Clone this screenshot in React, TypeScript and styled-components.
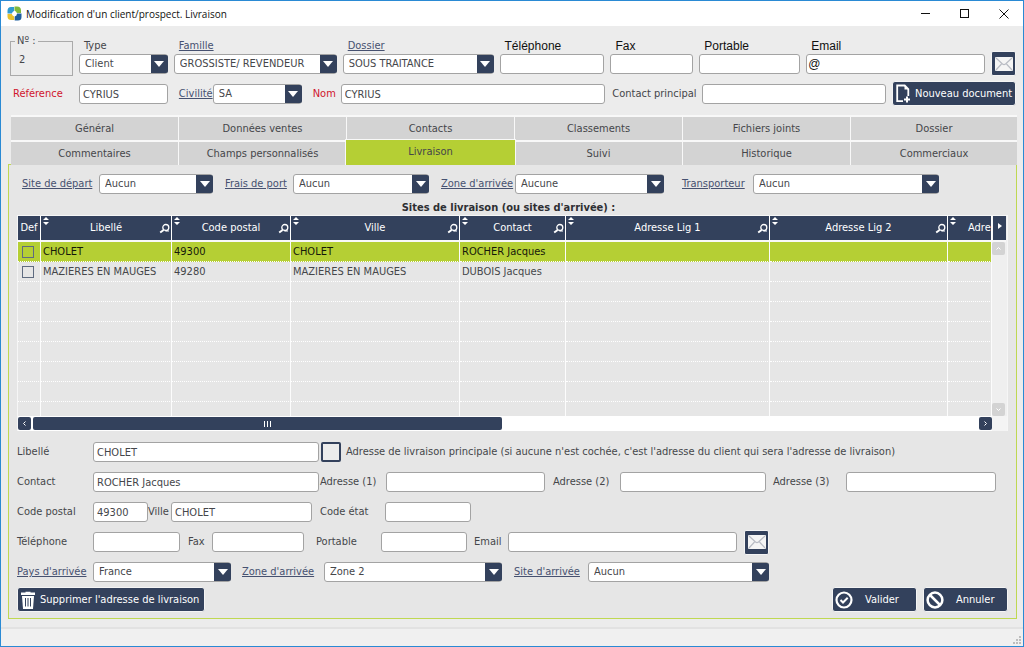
import React, { useId } from "react";
import styled, { createGlobalStyle, css } from "styled-components";

const navy = "#33415c";
const lime = "#b5cf34";
const ink = "#45464a";

const GlobalStyle = createGlobalStyle`
  * { box-sizing: border-box; }
  body {
    margin: 0;
    color: ${ink};
    font-family: "DejaVu Sans Condensed", "DejaVu Sans", sans-serif;
    font-size: 11px;
    line-height: 14px;
  }
  input, select, button { font: inherit; color: inherit; margin: 0; }
`;

const Window = styled.div`
  display: flex;
  flex-direction: column;
  min-height: 100vh;
  border: 1px solid #2a8ad4;
  background: #ececec;
`;

const TitleBar = styled.header`
  display: flex;
  align-items: center;
  height: 25px;
  padding-left: 6px;
  background: #fff;
  color: #111;
  font-family: "Open Sans", sans-serif;
`;

const Title = styled.h1`
  flex: 1;
  margin: 0 0 0 4px;
  font-size: 10px;
  font-weight: 400;
`;

const WindowButton = styled.button`
  display: flex;
  align-items: center;
  justify-content: center;
  width: 39px;
  height: 24px;
  padding: 0;
  border: 0;
  background: none;
`;

const ClientForm = styled.section`
  display: flex;
  flex-direction: column;
  gap: 5px;
  padding: 8px 7px 9px 9px;
`;

const TopRow = styled.div`
  display: flex;
  align-items: flex-end;
  gap: 6px;
`;

const NumberBox = styled.fieldset`
  width: 63px;
  height: 42px;
  margin: 0;
  padding: 5px 8px;
  border: 1px solid #aaa;
`;

const Legend = styled.legend`
  margin-left: -4px;
  padding: 0 2px;
  line-height: 14px;
`;

const Stack = styled.div<{ $w: number }>`
  display: flex;
  flex-direction: column;
  flex: ${(p) => p.$w} 1 ${(p) => p.$w}px;
  min-width: 0;
  padding-bottom: 2px;
`;

const StackLabel = styled.label<{ $arial?: boolean }>`
  height: 16px;
  padding-left: 5px;
  line-height: 16px;
  ${(p) =>
    p.$arial &&
    css`
      color: #111;
      font-family: "Liberation Sans", sans-serif;
      font-size: 12px;
    `}
`;

const Link = styled.a`
  color: #465170;
  text-decoration: underline;
`;

const Row = styled.div`
  display: flex;
  align-items: center;
  height: 25px;
`;

const Label = styled.label<{ $w: number; $indent?: number; $required?: boolean }>`
  flex: none;
  width: ${(p) => p.$w}px;
  padding-left: ${(p) => p.$indent ?? 0}px;
  white-space: nowrap;
  ${(p) => p.$required && "color: #d0142c;"}
`;

const sized = css<{ $w?: number }>`
  ${(p) => (p.$w ? `flex: ${p.$w} 1 ${p.$w}px;` : "width: 100%;")}
  min-width: 0;
`;

const Input = styled.input<{ $w?: number; $arial?: boolean }>`
  ${sized}
  height: 20px;
  padding: 1px 3px 0;
  border: 1px solid #a3a3a3;
  border-radius: 3px;
  background: #fff;
  ${(p) =>
    p.$arial &&
    css`
      padding: 0 1px;
      color: #111;
      font-family: "Liberation Sans", sans-serif;
      font-size: 12px;
    `}
`;

const SelectBox = styled.div<{ $w?: number }>`
  ${sized}
  position: relative;
  height: 20px;
`;

const NativeSelect = styled.select`
  display: block;
  width: 100%;
  height: 20px;
  padding: 0 18px 0 5px;
  border: 1px solid #a3a3a3;
  border-radius: 3px;
  background: #fff;
  appearance: none;
`;

const Arrow = styled.span`
  position: absolute;
  top: 1px;
  right: 0;
  display: flex;
  align-items: center;
  justify-content: center;
  width: 17px;
  height: 18px;
  border-radius: 0 2px 2px 0;
  background: ${navy};
  pointer-events: none;
`;

const Spacer = styled.div<{ $w: number }>`
  flex: ${(p) => p.$w} 1 ${(p) => p.$w}px;
`;

const Button = styled.button<{ $w: number; $gap?: number }>`
  display: flex;
  flex: none;
  align-items: center;
  gap: ${(p) => p.$gap ?? 4}px;
  width: ${(p) => p.$w}px;
  height: 25px;
  padding: 0 2px;
  border: 1px solid #f4f4f4;
  border-radius: 3px;
  background: ${navy};
  color: #fff;
  white-space: nowrap;
  & > svg { flex: none; }
`;

const MailButton = styled.button`
  display: flex;
  flex: none;
  align-items: center;
  justify-content: center;
  width: 25px;
  height: 25px;
  padding: 0;
  border: 1px solid #f4f4f4;
  border-radius: 2px;
  background: ${navy};
`;

const Tabs = styled.nav`
  position: relative;
  z-index: 1;
  display: grid;
  grid-template-columns: repeat(5, 168fr) 166fr;
  margin: 0 6px -1px 10px;
`;

const Tab = styled.button<{ $active?: boolean }>`
  height: 25px;
  padding: 0;
  border: solid #f8f8f8;
  border-width: 2px 1px 0 0;
  background: #d3d3d3;
  &:nth-child(6n) { border-right: 0; }
  ${(p) =>
    p.$active &&
    css`
      height: 26px;
      margin: -1px -1px 0 -2px;
      border-width: 1px 1px 0;
      padding-bottom: 1px;
      background: ${lime};
      z-index: 1;
    `}
`;

const Panel = styled.main`
  flex: 1;
  margin: 0 6px 8px 7px;
  padding: 6px 8px 6px 8px;
  border: 1px solid #bfd852;
  background: #e6e6e6;
`;

const Caption = styled.h2`
  height: 19px;
  margin: 0 8px 0 0;
  padding-top: 3px;
  color: #2e2f33;
  font-size: 11px;
  font-weight: 700;
  line-height: 18px;
  text-align: center;
`;

const GridFrame = styled.div`
  display: grid;
  grid-template-columns: 1fr 15px;
  margin: 0 0 6px 0;
  border: 1px solid #f6f6f6;
  border-width: 1px 1px 0 1px;
`;

const TableClip = styled.div`
  height: 200px;
  overflow: hidden;
`;

const Table = styled.table`
  width: 100%;
  border-collapse: separate;
  border-spacing: 0;
  table-layout: fixed;
`;

const Th = styled.th`
  height: 26px;
  padding: 0;
  overflow: hidden;
  border-right: 1px solid #fff;
  border-bottom: 2px solid #f8f8f8;
  background: ${navy};
  color: #fff;
  font-weight: 400;
`;

const ThInner = styled.div<{ $narrow?: boolean }>`
  display: grid;
  grid-template-columns: ${(p) => (p.$narrow ? "20px 1fr" : "12px 1fr 12px")};
  align-items: center;
  height: 24px;
  text-align: ${(p) => (p.$narrow ? "left" : "center")};
  white-space: nowrap;
  & > svg:first-child { align-self: start; margin: 1px 0 0 2px; }
`;

const Tr = styled.tr<{ $selected?: boolean }>`
  ${(p) => p.$selected && `background: ${lime}; color: #15180a;`}
`;

const Td = styled.td`
  height: 20px;
  padding: 0 2px;
  overflow: hidden;
  border-right: 1px solid #fcfcfc;
  border-bottom: 1px dotted #fff;
  white-space: nowrap;
`;

const RowCheck = styled.input`
  display: block;
  width: 12px;
  height: 12px;
  margin-left: 2px;
  border: 1px solid #5f6b80;
  background: transparent;
  appearance: none;
`;

const BigCheck = styled.input`
  flex: none;
  width: 20px;
  height: 20px;
  border: 2px solid ${navy};
  border-radius: 2px;
  background: #ececec;
  appearance: none;
`;

const VScroll = styled.div`
  display: flex;
  flex-direction: column;
  justify-content: space-between;
  background: #efefef;
`;

const ScrollButton = styled.button<{ $tone?: "light" }>`
  display: flex;
  align-items: center;
  justify-content: center;
  width: 13px;
  height: 13px;
  padding: 0;
  border: 0;
  border-radius: 2px;
  background: ${(p) => (p.$tone ? "#d3d3d3" : navy)};
`;

const MoreColumns = styled.button`
  display: flex;
  justify-content: center;
  width: 14px;
  height: 26px;
  padding: 7px 0 0;
  border: solid #f8f8f8;
  border-width: 0 0 2px 1px;
  background: ${navy};
`;

const HScroll = styled.div`
  display: flex;
  align-items: center;
  gap: 2px;
  height: 15px;
  background: #fff;
`;

const Thumb = styled.div`
  display: flex;
  align-items: center;
  justify-content: center;
  flex: 470;
  height: 13px;
  border-radius: 2px;
  background: ${navy};
`;

const Track = styled.div`
  flex: 474;
`;

const Corner = styled.div`
  background: #f4f4f4;
`;

const FormRow = styled.div`
  display: flex;
  align-items: center;
  height: 30px;
`;

const Actions = styled.div`
  display: flex;
  align-items: center;
  gap: 6px;
  & > :first-child { margin-right: auto; }
`;

const StatusBar = styled.footer`
  display: flex;
  align-items: flex-end;
  justify-content: flex-end;
  height: 19px;
  padding: 2px;
  border-top: 2px solid #e2e2e2;
  background: #f0f0f0;
`;

function Select({ id, w, value, label }: { id?: string; w?: number; value: string; label: string }) {
  return (
    <SelectBox $w={w}>
      <NativeSelect id={id} aria-label={label} defaultValue={value}>
        <option>{value}</option>
      </NativeSelect>
      <Arrow>
        <svg width="10" height="6" viewBox="0 0 10 6"><path d="M0 0h10L5 6z" fill="#fff" /></svg>
      </Arrow>
    </SelectBox>
  );
}

function TextField(p: { w: number; label: string; labelW: number; indent?: number; value?: string; required?: boolean }) {
  const id = useId();
  return (
    <>
      <Label htmlFor={id} $w={p.labelW} $indent={p.indent} $required={p.required}>{p.label}</Label>
      <Input id={id} $w={p.w} defaultValue={p.value} />
    </>
  );
}

function SelectField(p: { w: number; label: string; labelW: number; indent?: number; value: string }) {
  const id = useId();
  return (
    <>
      <Label htmlFor={id} $w={p.labelW} $indent={p.indent}><Link href="#">{p.label}</Link></Label>
      <Select id={id} w={p.w} value={p.value} label={p.label} />
    </>
  );
}

function StackField(p: { w: number; label: string; value?: string; kind: "select" | "link" | "text" }) {
  const id = useId();
  const arial = p.kind === "text";
  return (
    <Stack $w={p.w}>
      <StackLabel htmlFor={id} $arial={arial}>
        {p.kind === "link" ? <Link href="#">{p.label}</Link> : p.label}
      </StackLabel>
      {arial ? <Input id={id} $arial defaultValue={p.value} /> : <Select id={id} value={p.value ?? ""} label={p.label} />}
    </Stack>
  );
}

const Logo = () => (
  <svg width="15" height="15" viewBox="0 0 15 15">
    <path d="M4 1h3v4a3 3 0 0 0-2 2.500H.5V5Q.5 1 4 1z" fill="#2f9bd0" />
    <path d="M7.500 .5H10q4 0 4 4V7H9.800a3 3 0 0 0-2.300-2.200z" fill="#7fb93b" />
    <path d="M.5 8h4.300a3 3 0 0 0 2.400 2.400V14H4.500Q.5 14 .5 10.500z" fill="#e8c22d" />
    <path d="M10 7.500h4.500V11q0 3.500-3.500 3.500H7.700v-4A3 3 0 0 0 10 7.500z" fill="#1d5f9e" />
    <path d="M7.500 5.200L9.800 7.500 7.500 9.800 5.200 7.500z" fill="#fff" />
  </svg>
);

const Mail = () => (
  <svg width="18" height="14" viewBox="0 0 18 14">
    <rect width="18" height="14" rx="1" fill="#f5f5f5" />
    <path d="M1 1l6.500 6q1.500 1.200 3 0L17 1M1 13l5.500-6M17 13l-5.500-6" fill="none" stroke="#b9bcc4" strokeWidth="1.200" />
  </svg>
);

const NewDoc = () => (
  <svg width="16" height="19" viewBox="0 0 16 19">
    <path d="M8 17.200H2.200V1.500h7.500l3.600 3.600v7" fill="none" stroke="#fff" strokeWidth="1.800" />
    <path d="M9.500 1.500v4h4z" fill="#fff" />
    <path d="M12 12.500v6M9 15.500h6" stroke="#fff" strokeWidth="2" />
  </svg>
);

const Trash = () => (
  <svg width="16" height="18" viewBox="0 0 16 18">
    <path d="M5.500 1.500V.8h5v.7H15v2.500H1V1.500z" fill="#fff" />
    <path d="M2 5h12l-1 13H3z" fill="#fff" />
    <path d="M5.500 7v8.500M8 7v8.500M10.500 7v8.500" stroke={navy} strokeWidth="1" />
  </svg>
);

const Check = () => (
  <svg width="18" height="18" viewBox="0 0 18 18" fill="none" stroke="#fff">
    <circle cx="9" cy="9" r="7.500" strokeWidth="2.200" />
    <path d="M5.500 9l2.500 2.500 4.700-4.700" strokeWidth="2" />
  </svg>
);

const Forbid = () => (
  <svg width="18" height="18" viewBox="0 0 18 18" fill="none" stroke="#fff" strokeWidth="2.500">
    <circle cx="9" cy="9" r="7.400" />
    <path d="M4 4l10 10" />
  </svg>
);

const Sort = () => (
  <svg width="6" height="8" viewBox="0 0 6 8">
    <path d="M3 0l3 3H0zM3 8L0 5h6z" fill="#fff" />
  </svg>
);

const Search = () => (
  <svg width="11" height="11" viewBox="0 0 11 11" fill="none" stroke="#fff">
    <circle cx="6.800" cy="4.500" r="3" strokeWidth="1.300" />
    <path d="M4.600 7L1.200 9.500" strokeWidth="2" />
    <path d="M6.500 8h3.500" strokeWidth="1" />
  </svg>
);

const Chevron = ({ d, color = "#fff" }: { d: string; color?: string }) => (
  <svg width="5" height="5" viewBox="0 0 5 5"><path d={d} fill="none" stroke={color} /></svg>
);

const tabs = [
  "Général", "Données ventes", "Contacts", "Classements", "Fichiers joints", "Dossier",
  "Commentaires", "Champs personnalisés", "Livraison", "Suivi", "Historique", "Commerciaux",
];

const columns = [
  { name: "Libellé", w: 131 },
  { name: "Code postal", w: 119 },
  { name: "Ville", w: 169 },
  { name: "Contact", w: 106 },
  { name: "Adresse Lig 1", w: 204 },
  { name: "Adresse Lig 2", w: 178 },
  { name: "Adre", w: 44, narrow: true },
];

const sites = [
  ["CHOLET", "49300", "CHOLET", "ROCHER Jacques", "", "", ""],
  ["MAZIERES EN MAUGES", "49280", "MAZIERES EN MAUGES", "DUBOIS Jacques", "", "", ""],
];
const blankRows = Array.from({ length: 7 }, () => columns.map(() => ""));

export default function App() {
  return (
    <Window>
      <GlobalStyle />
      <TitleBar>
        <Logo />
        <Title>Modification d'un client/prospect. Livraison</Title>
        <WindowButton aria-label="Réduire">
          <svg width="9" height="9"><path d="M0 4.500h9" stroke="#111" /></svg>
        </WindowButton>
        <WindowButton aria-label="Agrandir">
          <svg width="9" height="9"><rect x=".5" y=".5" width="8" height="8" fill="none" stroke="#111" /></svg>
        </WindowButton>
        <WindowButton aria-label="Fermer">
          <svg width="10" height="10"><path d="M.5 .5l9 9M9.500 .5l-9 9" stroke="#111" /></svg>
        </WindowButton>
      </TitleBar>

      <ClientForm>
        <TopRow>
          <NumberBox>
            <Legend>Nº :</Legend>2
          </NumberBox>
          <StackField w={89} kind="select" label="Type" value="Client" />
          <StackField w={163} kind="link" label="Famille" value="GROSSISTE/ REVENDEUR" />
          <StackField w={151} kind="link" label="Dossier" value="SOUS TRAITANCE" />
          <StackField w={105} kind="text" label="Téléphone" />
          <StackField w={83} kind="text" label="Fax" />
          <StackField w={101} kind="text" label="Portable" />
          <StackField w={179} kind="text" label="Email" value="@" />
          <MailButton aria-label="Envoyer un email"><Mail /></MailButton>
        </TopRow>
        <Row>
          <TextField label="Référence" labelW={69} indent={3} w={89} value="CYRIUS" required />
          <SelectField label="Civilité" labelW={45} indent={11} w={89} value="SA" />
          <TextField label="Nom" labelW={39} indent={11} w={265} value="CYRIUS" required />
          <TextField label="Contact principal" labelW={97} indent={7} w={184} />
          <Label as="span" $w={6} />
          <Button $w={124}><NewDoc />Nouveau document</Button>
        </Row>
      </ClientForm>

      <Tabs>
        {tabs.map((t) => <Tab key={t} $active={t === "Livraison"}>{t}</Tab>)}
      </Tabs>

      <Panel>
        <Row>
          <SelectField label="Site de départ" labelW={82} indent={5} w={114} value="Aucun" />
          <SelectField label="Frais de port" labelW={80} indent={12} w={136} value="Aucun" />
          <SelectField label="Zone d'arrivée" labelW={86} indent={12} w={149} value="Aucune" />
          <SelectField label="Transporteur" labelW={89} indent={18} w={186} value="Aucun" />
          <Spacer $w={69} />
        </Row>
        <Caption>Sites de livraison (ou sites d'arrivée) :</Caption>
        <GridFrame>
          <TableClip>
            <Table>
              <colgroup>
                <col style={{ width: 23 }} />
                {columns.map((c) => <col key={c.name} style={{ width: c.w }} />)}
              </colgroup>
              <thead>
                <tr>
                  <Th scope="col">Def</Th>
                  {columns.map((c) => (
                    <Th key={c.name} scope="col">
                      <ThInner $narrow={c.narrow}><Sort />{c.name}{!c.narrow && <Search />}</ThInner>
                    </Th>
                  ))}
                </tr>
              </thead>
              <tbody>
                {[...sites, ...blankRows].map((r, i) => (
                  <Tr key={i} $selected={i === 0}>
                    <Td>{i < sites.length && <RowCheck type="checkbox" aria-label={`Par défaut : ${r[0]}`} />}</Td>
                    {r.map((c, j) => <Td key={j}>{c}</Td>)}
                  </Tr>
                ))}
              </tbody>
            </Table>
          </TableClip>
          <VScroll>
            <div>
              <MoreColumns aria-label="Autres colonnes">
                <svg width="4" height="6"><path d="M0 0l4 3-4 3z" fill="#fff" /></svg>
              </MoreColumns>
              <ScrollButton $tone="light" aria-label="Haut"><Chevron d="M.5 3.500l2-2 2 2" /></ScrollButton>
            </div>
            <ScrollButton $tone="light" aria-label="Bas"><Chevron d="M.5 1.500l2 2 2-2" /></ScrollButton>
          </VScroll>
          <HScroll>
            <ScrollButton aria-label="Gauche"><Chevron d="M3.500 .5l-2 2 2 2" /></ScrollButton>
            <Thumb><svg width="7" height="6"><path d="M.5 0v6M3.500 0v6M6.500 0v6" stroke="#fff" /></svg></Thumb>
            <Track />
            <ScrollButton aria-label="Droite"><Chevron d="M1.500 .5l2 2-2 2" /></ScrollButton>
          </HScroll>
          <Corner />
        </GridFrame>

        <FormRow>
          <TextField label="Libellé" labelW={76} w={226} value="CHOLET" />
          <Label as="span" $w={2} />
          <BigCheck type="checkbox" id="principale" />
          <Label htmlFor="principale" $w={560} $indent={5}>
            Adresse de livraison principale (si aucune n'est cochée, c'est l'adresse du client qui sera l'adresse de livraison)
          </Label>
          <Spacer $w={107} />
        </FormRow>
        <FormRow>
          <TextField label="Contact" labelW={76} w={226} value="ROCHER Jacques" />
          <TextField label="Adresse (1)" labelW={67} indent={1} w={159} />
          <TextField label="Adresse (2)" labelW={75} indent={8} w={146} />
          <TextField label="Adresse (3)" labelW={80} indent={7} w={150} />
          <Spacer $w={12} />
        </FormRow>
        <FormRow>
          <TextField label="Code postal" labelW={76} w={55} value="49300" />
          <TextField label="Ville" labelW={23} w={141} value="CHOLET" />
          <TextField label="Code état" labelW={73} indent={8} w={86} />
          <Spacer $w={537} />
        </FormRow>
        <FormRow>
          <TextField label="Téléphone" labelW={76} w={87} />
          <TextField label="Fax" labelW={32} indent={8} w={92} />
          <TextField label="Portable" labelW={77} indent={12} w={86} />
          <TextField label="Email" labelW={41} indent={7} w={229} />
          <Label as="span" $w={7} />
          <MailButton aria-label="Envoyer un email au contact"><Mail /></MailButton>
          <Spacer $w={239} />
        </FormRow>
        <FormRow>
          <SelectField label="Pays d'arrivée" labelW={76} w={138} value="France" />
          <SelectField label="Zone d'arrivée" labelW={93} indent={11} w={178} value="Zone 2" />
          <SelectField label="Site d'arrivée" labelW={86} indent={12} w={181} value="Aucun" />
          <Spacer $w={239} />
        </FormRow>
        <Actions>
          <Button $w={188}><Trash />Supprimer l'adresse de livraison</Button>
          <Button $w={85} $gap={12}><Check />Valider</Button>
          <Button $w={85} $gap={12}><Forbid />Annuler</Button>
        </Actions>
      </Panel>

      <StatusBar>
        <svg width="8" height="8" fill="#bdbdbd">
          <path d="M6 0h2v2H6zM3 3h2v2H3zM6 3h2v2H6zM0 6h2v2H0zM3 6h2v2H3zM6 6h2v2H6z" />
        </svg>
      </StatusBar>
    </Window>
  );
}
